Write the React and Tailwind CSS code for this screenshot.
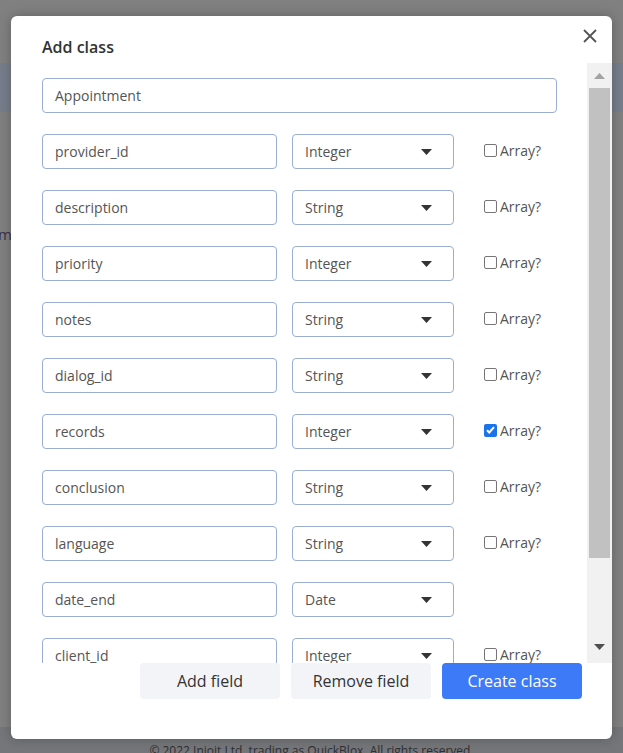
import React from "react";

const fields = [
  { name: "provider_id", type: "Integer", array: false },
  { name: "description", type: "String", array: false },
  { name: "priority", type: "Integer", array: false },
  { name: "notes", type: "String", array: false },
  { name: "dialog_id", type: "String", array: false },
  { name: "records", type: "Integer", array: true },
  { name: "conclusion", type: "String", array: false },
  { name: "language", type: "String", array: false },
  { name: "date_end", type: "Date", array: null },
  { name: "client_id", type: "Integer", array: false },
];

const Caret = ({ className = "fill-[#333]" }) => (
  <svg width="11" height="6" viewBox="0 0 11 6" className={className}>
    <path d="M0 0h11L5.5 6z" />
  </svg>
);

const Checkbox = ({ checked }) =>
  checked ? (
    <span className="flex h-[13px] w-[13px] items-center justify-center rounded-[2px] bg-[#1a73e8]">
      <svg width="9" height="8" viewBox="0 0 9 8">
        <path d="M1 4.2l2.3 2.3L8 1.2" fill="none" stroke="#fff" strokeWidth="2" />
      </svg>
    </span>
  ) : (
    <span className="h-[13px] w-[13px] rounded-[2px] border border-[#767676] bg-white" />
  );

const FieldRow = ({ field }) => (
  <div className="flex h-[35px] shrink-0 items-center">
    <div className="flex h-full w-[235px] items-center rounded-[4px] border border-[#9badd3] px-3 text-[14px] text-[#555]">
      {field.name}
    </div>
    <div className="ml-[15px] flex h-full w-[162px] items-center justify-between rounded-[4px] border border-[#9badd3] pl-3 pr-[21px] text-[14px] text-[#555]">
      <span>{field.type}</span>
      <Caret />
    </div>
    {field.array !== null && (
      <label className="mb-[3px] ml-[30px] flex items-center gap-[3px] text-[14px] text-[#555]">
        <Checkbox checked={field.array} />
        Array?
      </label>
    )}
  </div>
);

export default function App() {
  return (
    <div className="relative flex h-[753px] w-[623px] flex-col overflow-hidden bg-[#808080] font-['Open_Sans',sans-serif]">
      {/* dimmed page behind the dialog */}
      <div className="h-[63px] shrink-0" />
      <div className="h-[49px] shrink-0 bg-[#777d8b]" />
      <div className="mt-[111px] flex w-[12px] justify-end overflow-hidden whitespace-nowrap text-[15px] text-[#3d2f4a]">
        <span>Custom</span>
      </div>
      <div className="flex-1" />
      <div className="flex h-[26px] shrink-0 justify-center bg-[#75767a] pt-[15px] text-[12px] text-[#2e2e30]">
        © 2022 Injoit Ltd. trading as QuickBlox. All rights reserved.
      </div>

      {/* dialog */}
      <div className="absolute left-[11px] top-[16px] flex h-[723px] w-[601px] flex-col rounded-[6px] bg-white shadow-[0_0_12px_rgba(0,0,0,0.25)]">
        <div className="flex items-start justify-between pl-[31px] pr-[15px]">
          <h2 className="pt-[19px] text-[16px] font-semibold leading-6 text-[#333]">Add class</h2>
          <button className="mt-[13px] p-0">
            <svg width="14" height="14" viewBox="0 0 14 14" className="stroke-[#555]">
              <path d="M1 1l12 12M13 1L1 13" strokeWidth="1.8" />
            </svg>
          </button>
        </div>

        <div className="mt-[4px] flex h-[600px] shrink-0">
          <div className="flex flex-1 flex-col gap-[21px] overflow-hidden pl-[31px] pt-[15px]">
            <div className="flex h-[35px] w-[515px] shrink-0 items-center rounded-[4px] border border-[#9badd3] px-3 text-[14px] text-[#555]">
              Appointment
            </div>
            {fields.map((f) => (
              <FieldRow key={f.name} field={f} />
            ))}
          </div>
          <div className="flex w-[25px] flex-col items-center bg-[#f1f1f1]">
            <div className="flex h-[25px] items-center justify-center pt-[1px]">
              <Caret className="rotate-180 fill-[#a3a3a3]" />
            </div>
            <div className="h-[470px] w-[21px] bg-[#c1c1c1]" />
            <div className="flex-1" />
            <div className="flex h-[30px] items-center justify-center pb-[2px]">
              <Caret className="fill-[#505050]" />
            </div>
          </div>
        </div>

        <div className="flex justify-end gap-[11px] pr-[30px]">
          <button className="h-[36px] w-[140px] rounded-[4px] bg-[#f3f4f7] text-[16px] text-[#333]">
            Add field
          </button>
          <button className="h-[36px] w-[140px] rounded-[4px] bg-[#f3f4f7] text-[16px] text-[#333]">
            Remove field
          </button>
          <button className="h-[36px] w-[140px] rounded-[4px] bg-[#3d7af8] text-[16px] text-white">
            Create class
          </button>
        </div>
      </div>
    </div>
  );
}
